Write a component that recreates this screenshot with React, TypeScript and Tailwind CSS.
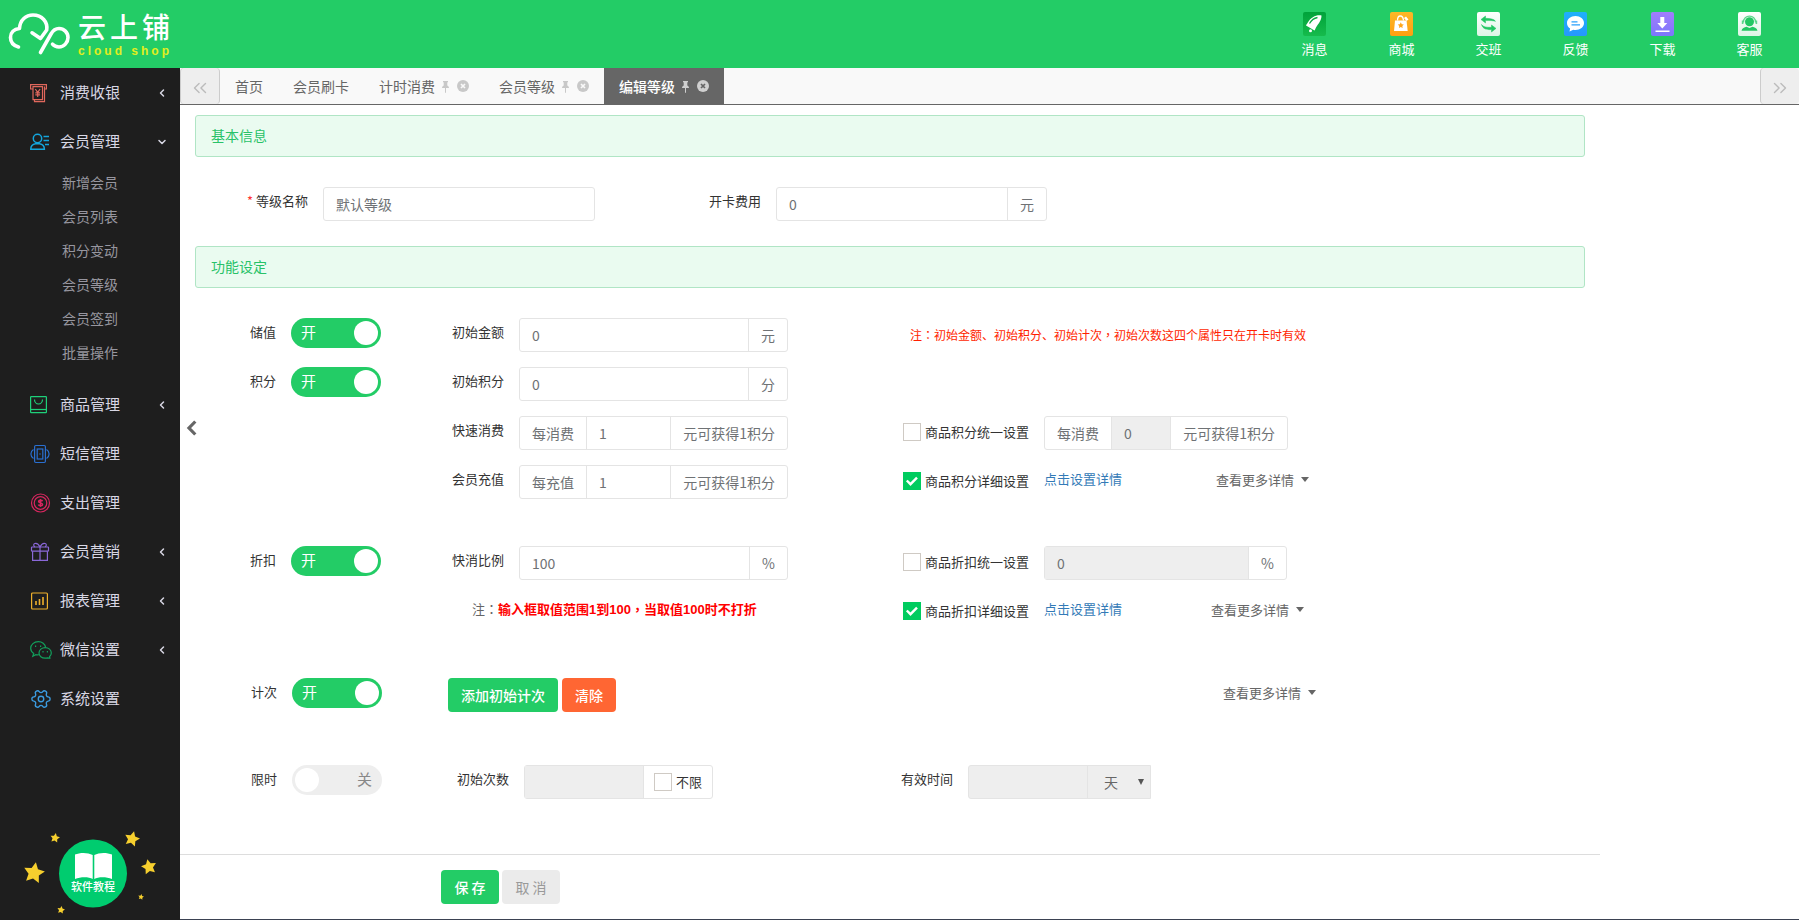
import React, { useState } from 'react';
import { ChevronDown, ChevronLeft, ChevronsLeft, ChevronsRight, Settings } from 'lucide-react';
import clsx from 'clsx';

interface MenuItem {
  label: string;
  icon: React.ReactNode;
  arrow?: 'left' | 'down';
  children?: string[];
}

const MenuSvg = ({ color, children }: { color: string; children: React.ReactNode }) => (
  <svg width="22" height="20" viewBox="0 0 22 20" fill="none" stroke={color} strokeWidth="1.2" className="shrink-0">
    {children}
  </svg>
);

const menu: MenuItem[] = [
  {
    label: '消费收银',
    arrow: 'left',
    icon: (
      <MenuSvg color="#e0675c">
        <path d="M3 6H.6V1.6h15.8V6H14.5" />
        <path d="M3 3.6v13h9.5V3.6z" />
        <path d="M4.5 16.8v1.8h10V3.6" />
        <path d="M5.3 6l2.4 3.4L10.1 6M7.7 9.4V14M5.3 9.8h4.8M5.3 11.8h4.8" />
      </MenuSvg>
    ),
  },
  {
    label: '会员管理',
    arrow: 'down',
    icon: (
      <MenuSvg color="#14a5dc">
        <circle cx="7.5" cy="6.5" r="4.2" strokeWidth="1.5" />
        <path d="M.8 17.2c0-3.2 2.2-5 4.7-5.400h4c2.500.4 4.900 2.200 4.900 5.400z" strokeWidth="1.5" />
        <path d="M13.5 4.5H19M13.5 8.5H19M15 12.5h4" strokeWidth="1.3" />
      </MenuSvg>
    ),
    children: ['新增会员', '会员列表', '积分变动', '会员等级', '会员签到', '批量操作'],
  },
  {
    label: '商品管理',
    arrow: 'left',
    icon: (
      <MenuSvg color="#1ed07a">
        <rect x=".6" y="1.6" width="15.8" height="16" rx=".6" />
        <path d="M.6 14.5h15.8" />
        <path d="M4.5 4.5a4 4.5 0 0 0 8 0" />
      </MenuSvg>
    ),
  },
  {
    label: '短信管理',
    icon: (
      <MenuSvg color="#2a6fd0">
        <rect x="4.6" y="1.5" width="10.8" height="17" rx="1.2" />
        <rect x="7.2" y="5" width="5.6" height="10" />
        <path d="M9.5 10h1" strokeWidth="1.5" />
        <path d="M3.5 5.5a5.2 5.2 0 0 0 0 9M16.5 5.5a5.2 5.2 0 0 1 0 9" />
      </MenuSvg>
    ),
  },
  {
    label: '支出管理',
    icon: (
      <MenuSvg color="#d8265f">
        <circle cx="10.5" cy="10" r="9" />
        <circle cx="10.5" cy="10" r="6.3" />
        <path d="M12.6 8.2c-.5-1.2-4-1.3-4 .3s4 1.2 4 2.9-3.7 1.7-4.2.2M10.5 6v8" strokeWidth="1.5" />
      </MenuSvg>
    ),
  },
  {
    label: '会员营销',
    arrow: 'left',
    icon: (
      <MenuSvg color="#8a68d8">
        <rect x="1.5" y="5" width="17" height="4.2" rx=".6" />
        <path d="M2.6 9.2v9.2h14.8V9.2M10 5v13.4" />
        <path d="M10 5C8.5 2 6.5 1 4.8 1.5 3.2 2 3.5 4 4.8 5M10 5c1.5-3 3.5-4 5.2-3.5 1.6.5 1.3 2.5 0 3.5" />
      </MenuSvg>
    ),
  },
  {
    label: '报表管理',
    arrow: 'left',
    icon: (
      <MenuSvg color="#eeb02c">
        <rect x="1.6" y="2" width="15.8" height="16" rx="1" />
        <path d="M6 14v-4M9.5 14V8M13 14V6" strokeWidth="1.6" />
      </MenuSvg>
    ),
  },
  {
    label: '微信设置',
    arrow: 'left',
    icon: (
      <MenuSvg color="#12a05c">
        <path d="M15.6 7.3C15.2 4 12 1.7 8.3 1.7 4 1.7.7 4.6.7 8.2c0 2.2 1.1 4 3 5.2l-.9 2.8 3-1.6c1 .2 2 .3 3 .1" />
        <path d="M21.3 12.9c0-3-2.7-5.3-6.1-5.3S9 9.9 9 12.9s2.7 5.3 6.2 5.3c.8 0 1.5-.1 2.2-.3l2.5.1-.3-1.5c1.1-1 1.7-2.2 1.7-3.6z" />
        <path d="M5 6.3h1.2M10 6.3h1.2M12.4 11.7h1.2M16.8 11.7H18" strokeWidth="1.5" />
      </MenuSvg>
    ),
  },
  {
    label: '系统设置',
    icon: <Settings size={22} strokeWidth={1.5} className="shrink-0 rotate-90 text-[#3b9be0]" />,
  },
];

const stars = [
  { x: 34, y: 43, r: 11, rot: 10 },
  { x: 55, y: 8, r: 5, rot: 10 },
  { x: 132, y: 9, r: 8, rot: 15 },
  { x: 149, y: 37, r: 8, rot: -12 },
  { x: 141, y: 67, r: 3, rot: 10 },
  { x: 61, y: 80, r: 4, rot: 10 },
];

const starPoints = (r: number) =>
  Array.from({ length: 10 }, (_, i) => {
    const len = i % 2 ? r * 0.5 : r;
    const angle = (Math.PI / 5) * i - Math.PI / 2;
    return `${(len * Math.cos(angle)).toFixed(2)},${(len * Math.sin(angle)).toFixed(2)}`;
  }).join(' ');

const headerLinks = [
  {
    label: '消息',
    from: '#00a23a',
    to: '#16bb4c',
    art: (
      <>
        <path d="M18.5 3.5c-5-1-10.5 1.500-14 7.500-.8 1.400-1.500 2-1.500 2.600l8.500 4.900c.7-.4.7-1.400 1.500-2.900 3-5 5.500-7 5.500-12.100z" fill="#fff" />
        <circle cx="7.5" cy="18.8" r="1.5" fill="#fff" />
        <path d="M6.5 11.5c2-3.5 5-5.5 8-6" stroke="#0aab42" strokeWidth="1.3" fill="none" />
      </>
    ),
  },
  {
    label: '商城',
    from: '#fdb827',
    to: '#ff9f10',
    art: (
      <>
        <path d="M5 8.5h11.5l1.2 10.5H4z" fill="#fff" />
        <path d="M7.5 8.5C7.5 2.5 13 2.5 13.5 8.5" stroke="#fff" strokeWidth="1.3" fill="none" />
        <path d="M14 6l2-1.5 2.5 3L16.5 9z" fill="#fff" />
        <polygon points={starPoints(3.2)} transform="translate(10.8 13.5)" fill="#ffa51a" />
      </>
    ),
  },
  {
    label: '交班',
    from: '#ffffff',
    to: '#dcf5e5',
    art: (
      <path
        d="M8.500 4v2.300c5 .2 8.500.7 10 3-2.500-.8-5.500-.8-10-.7V11L4 7.500zM14.500 13v2.300c-5 .2-8.500-.3-10-2.800C6 17 9 17.800 14.500 17.600V20l4.500-3.600z"
        fill="#22c763"
        stroke="#22c763"
        strokeWidth=".5"
      />
    ),
  },
  {
    label: '反馈',
    from: '#1fb0fb',
    to: '#2697fb',
    art: (
      <>
        <path d="M11.5 4c-4.800 0-8.500 3-8.500 7 0 2.300 1.200 4.300 3.100 5.500L5.500 19.500l3.800-1.700c.7.200 1.400.2 2.200.2 4.800 0 8.500-3 8.500-7s-3.700-7-8.500-7z" fill="#fff" />
        <path d="M7.5 9.800h6M7.5 12.800h8.500" stroke="#2aa1fb" strokeWidth="1.2" />
      </>
    ),
  },
  {
    label: '下载',
    from: '#a27dfc',
    to: '#7b77fb',
    art: <path d="M9.300 5h4v6h3L11.300 16.500 6.300 11h3zM4.500 18.500h14v1.500h-14z" fill="#fff" />,
  },
  {
    label: '客服',
    from: '#ffffff',
    to: '#dcf5e5',
    art: (
      <>
        <circle cx="11.5" cy="9.8" r="4.5" fill="#22c763" />
        <path d="M5.5 10.5C5 2 18 2 17.5 10.5" stroke="#5bd68c" strokeWidth="1.3" fill="none" />
        <path d="M4.6 8.5v3.5M18.4 8.5v3.5" stroke="#5bd68c" strokeWidth="1.6" />
        <path d="M3.5 18.8c.5-2.800 3-3.500 5-4l3 1.200 3-1.200c2 .5 4.500 1.200 5 4z" fill="#22c763" />
      </>
    ),
  },
];

const tabs = [
  { label: '首页', closable: false },
  { label: '会员刷卡', closable: false },
  { label: '计时消费', closable: true },
  { label: '会员等级', closable: true },
  { label: '编辑等级', closable: true },
];

const Header = () => (
  <header className="flex h-[68px] shrink-0 items-center justify-between bg-[#23cc66] pl-2 pr-[6px] text-white">
    <a href="#home" className="flex items-center">
      <svg width="62" height="44" viewBox="0 0 62 44" fill="none" stroke="#fff" strokeWidth="3.6" strokeLinecap="round" strokeLinejoin="round">
        <path d="M10.5 35C5 33.5 2.5 30 2.5 25.5c0-5 3.5-8.5 9-9C12 8 18 3 25 3c9 0 15 7 13.7 15L32.5 26.5 24 20.8" />
        <path d="M32.5 40.5L43 22c2.5-4.5 5-5.5 8-5.5 5 0 9 4 9 9s-4 9.500-9 9.500c-3 0-5-1-6.500-2.800" />
      </svg>
      <span className="ml-2 flex flex-col">
        <span className="h-[34px] text-[28px] font-medium leading-8 tracking-[4px]">云上铺</span>
        <span className="font-[Liberation_Sans] text-xs font-bold leading-[14px] tracking-[3px] text-[#e2ee1e]">cloud shop</span>
      </span>
    </a>
    <nav className="flex">
      {headerLinks.map((item, i) => (
        <a key={item.label} href="#nav" className="flex w-[87px] flex-col items-center gap-1 pt-px">
          <svg width="23" height="24" viewBox="0 0 23 24">
            <defs>
              <linearGradient id={`head-${i}`} x1="0" y1="0" x2="0" y2="1">
                <stop offset="0" stopColor={item.from} />
                <stop offset="1" stopColor={item.to} />
              </linearGradient>
            </defs>
            <rect width="23" height="24" rx="2" fill={`url(#head-${i})`} />
            {item.art}
          </svg>
          <span className="text-[13px] leading-[18px]">{item.label}</span>
        </a>
      ))}
    </nav>
  </header>
);

const Sidebar = () => (
  <aside className="flex w-[180px] shrink-0 flex-col bg-[#1e1e1e]">
    <ul>
      {menu.map((item) => (
        <li key={item.label}>
          <a href="#menu" className="flex h-[49px] items-center gap-2 pl-[30px] pr-3 text-[15px] text-[#d8d7e4]">
            {item.icon}
            <span className="flex-1">{item.label}</span>
            {item.arrow === 'left' && <ChevronLeft size={12} strokeWidth={3} />}
            {item.arrow === 'down' && <ChevronDown size={12} strokeWidth={3} />}
          </a>
          {item.children && (
            <ul className="pb-[10px]">
              {item.children.map((child) => (
                <li key={child}>
                  <a href="#menu" className="block pb-[2px] pl-[62px] text-sm leading-8 text-[#97969f]">
                    {child}
                  </a>
                </li>
              ))}
            </ul>
          )}
        </li>
      ))}
    </ul>
    <a href="#guide" className="relative mt-auto block h-[90px]">
      <svg width="180" height="90" viewBox="0 0 180 90">
        {stars.map((s) => (
          <polygon key={s.x} points={starPoints(s.r)} transform={`translate(${s.x} ${s.y}) rotate(${s.rot})`} fill="#f6cf2e" />
        ))}
        <circle cx="93" cy="43.5" r="34" fill="#00cc6f" />
        <path d="M75 24.5c5-2.200 13-2.200 17.700.5v24c-4-2.500-12-2.500-17.700 0zM112 24.500c-5-2.200-13-2.200-17.700.5v24c4-2.500 12-2.500 17.700 0z" fill="#fff" />
      </svg>
      <span className="absolute left-[71px] top-[48px] text-[11px] font-medium leading-4 text-white">软件教程</span>
    </a>
  </aside>
);

const Tabs = () => {
  const [active, setActive] = useState('编辑等级');

  return (
    <div className="flex h-[37px] shrink-0 border-b border-[#666] bg-[#f9f9f9]">
      <button aria-label="向左" className="flex w-10 items-center justify-center rounded-sm border-x border-[#ccc] bg-[#eee] pt-1 text-[#bbb]">
        <ChevronsLeft size={22} strokeWidth={1.5} />
      </button>
      {tabs.map((tab) => (
        <button
          key={tab.label}
          onClick={() => setActive(tab.label)}
          className={clsx(
            'flex items-center px-[15px] pb-px text-sm',
            active === tab.label ? 'bg-[#666] font-medium text-white' : 'text-[#666]'
          )}
        >
          {tab.label}
          {tab.closable && (
            <svg width="27" height="14" viewBox="0 0 27 14" className={clsx('ml-[7px]', active === tab.label ? 'text-[#d0d0d0]' : 'text-[#c8c8c8]')}>
              <path d="M1 2h5v1.200H5.300V6.500C6.300 7 7 7.800 7 9H4v4.500L3.500 14 3 13.500V9H0c0-1.200.7-2 1.700-2.500V3.200H1z" fill="currentColor" />
              <circle cx="21" cy="7" r="6" fill="currentColor" />
              <path d="M19 5l4 4M23 5l-4 4" stroke={active === tab.label ? '#666' : '#f9f9f9'} strokeWidth="1.7" />
            </svg>
          )}
        </button>
      ))}
      <button aria-label="向右" className="ml-auto flex w-[39px] items-center justify-center rounded-sm border-l border-[#ccc] bg-[#eee] pt-1 text-[#bbb]">
        <ChevronsRight size={22} strokeWidth={1.5} />
      </button>
    </div>
  );
};

const SectionTitle = ({ children }: { children: React.ReactNode }) => (
  <h2 className="mx-[15px] rounded-[3px] border border-[#b0e5c5] bg-[#eafbf0] px-[15px] pb-[2px] text-sm leading-[38px] text-[#28c268]">{children}</h2>
);

const FieldLabel = ({ htmlFor, children }: { htmlFor?: string; children: React.ReactNode }) => (
  <label htmlFor={htmlFor} className="pr-[15px] text-right leading-7 text-[#333]">
    {children}
  </label>
);

// punctuation centred in its full-width cell
const Mark = ({ children }: { children: string }) => (
  <span className="font-['Noto_Sans_CJK_TC',sans-serif]">{children}</span>
);

interface InputGroupProps {
  id: string;
  value?: string;
  before?: string;
  after?: string;
  disabled?: boolean;
  className?: string;
  label?: string;
}

const InputGroup = ({ id, value = '', before, after, disabled, className, label }: InputGroupProps) => (
  <div className={clsx('flex h-[34px] rounded-[3px] border border-[#e4e4e4] bg-white text-sm leading-8 text-[#6f7275]', className)}>
    {before && <span className="shrink-0 border-r border-[#e4e4e4] px-3">{before}</span>}
    <input
      id={id}
      aria-label={label}
      defaultValue={value}
      disabled={disabled}
      className="w-0 min-w-0 flex-1 px-3 outline-none disabled:bg-[#eee]"
    />
    {after && <span className="shrink-0 border-l border-[#e4e4e4] px-3">{after}</span>}
  </div>
);

const Toggle = ({ id, initial = true }: { id: string; initial?: boolean }) => {
  const [on, setOn] = useState(initial);

  return (
    <label
      className={clsx(
        'flex h-[30px] w-[90px] items-center justify-between rounded-full px-[3px] text-[15px]',
        on ? 'bg-[#23cc66] text-white' : 'flex-row-reverse bg-[#eee] text-[#888]'
      )}
    >
      <input id={id} type="checkbox" className="sr-only" checked={on} onChange={() => setOn(!on)} />
      <span className="px-[7px] pb-px">{on ? '开' : '关'}</span>
      <span className="size-6 rounded-full bg-white" />
    </label>
  );
};

const Check = ({ id, label, checked }: { id: string; label: string; checked?: boolean }) => (
  <label htmlFor={id} className="flex h-8 items-center gap-1 whitespace-nowrap text-[#333]">
    <span className="relative size-[18px]">
      <input
        id={id}
        type="checkbox"
        defaultChecked={checked}
        className="peer block size-[18px] appearance-none border border-[#cfcac4] bg-white checked:border-[#00cc5f] checked:bg-[#00cc5f]"
      />
      <svg className="pointer-events-none absolute inset-0 hidden peer-checked:block" width="18" height="18" viewBox="0 0 18 18" fill="none" stroke="#fff" strokeWidth="2.4">
        <path d="M3.8 8.5l3.7 3.7 6.5-6.500" />
      </svg>
    </span>
    {label}
  </label>
);

const MoreButton = () => (
  <button className="flex h-[30px] items-center gap-[7px] whitespace-nowrap pb-px text-[#666]">
    查看更多详情
    <svg width="8" height="5" viewBox="0 0 8 5" fill="#666">
      <path d="M0 0h8L4 5z" />
    </svg>
  </button>
);

const rowGrid = 'grid min-h-[34px] grid-cols-[96px_90px_138px_269px_115px_141px_auto]';

const LevelForm = () => (
  <form className="max-w-[1420px] pt-[10px] text-[13px]" onSubmit={(e) => e.preventDefault()}>
    <SectionTitle>基本信息</SectionTitle>
    <div className="mx-[15px] mb-[25px] mt-[30px] grid grid-cols-[128px_272px_181px_271px]">
      <FieldLabel htmlFor="name">
        <span className="text-[#f33]">*</span> 等级名称
      </FieldLabel>
      <InputGroup id="name" value="默认等级" />
      <FieldLabel htmlFor="fee">开卡费用</FieldLabel>
      <InputGroup id="fee" value="0" after="元" />
    </div>

    <SectionTitle>功能设定</SectionTitle>
    <div className="mx-[15px] mt-[30px] flex flex-col gap-[15px]">
      <div className={rowGrid}>
        <FieldLabel htmlFor="stored">储值</FieldLabel>
        <Toggle id="stored" />
        <FieldLabel htmlFor="amount">初始金额</FieldLabel>
        <InputGroup id="amount" value="0" after="元" />
        <p className="col-span-2 col-start-6 pl-[7px] text-xs leading-[34px] text-[#ff1e00]">
          注<Mark>：</Mark>初始金额、初始积分、初始计次<Mark>，</Mark>初始次数这四个属性只在开卡时有效
        </p>
      </div>
      <div className={rowGrid}>
        <FieldLabel htmlFor="points">积分</FieldLabel>
        <Toggle id="points" />
        <FieldLabel htmlFor="initPoints">初始积分</FieldLabel>
        <InputGroup id="initPoints" value="0" after="分" />
      </div>
      <div className={rowGrid}>
        <span className="col-span-2" />
        <FieldLabel htmlFor="quick">快速消费</FieldLabel>
        <InputGroup id="quick" value="1" before="每消费" after="元可获得1积分" />
        <span />
        <Check id="uniPoints" label="商品积分统一设置" />
        <InputGroup id="uniPointsValue" label="每消费" value="0" before="每消费" after="元可获得1积分" disabled className="w-[244px]" />
      </div>
      <div className={rowGrid}>
        <span className="col-span-2" />
        <FieldLabel htmlFor="recharge">会员充值</FieldLabel>
        <InputGroup id="recharge" value="1" before="每充值" after="元可获得1积分" />
        <span />
        <Check id="detailPoints" label="商品积分详细设置" checked />
        <div className="flex items-start gap-[94px] leading-7">
          <a href="#points" className="text-[#337ab7]">点击设置详情</a>
          <MoreButton />
        </div>
      </div>
    </div>

    <div className="mx-[15px] mt-[47px] flex flex-col gap-[15px]">
      <div className={rowGrid}>
        <FieldLabel htmlFor="discount">折扣</FieldLabel>
        <Toggle id="discount" />
        <FieldLabel htmlFor="ratio">快消比例</FieldLabel>
        <InputGroup id="ratio" value="100" after="%" />
        <span />
        <Check id="uniDiscount" label="商品折扣统一设置" />
        <InputGroup id="uniDiscountValue" label="商品折扣" value="0" after="%" disabled className="w-[243px]" />
      </div>
      <div className={rowGrid}>
        <p className="col-span-2 col-start-3 pl-[91px] leading-7 text-[#666]">
          注<Mark>：</Mark>
          <b className="font-['Liberation_Sans','Noto_Sans_CJK_SC',sans-serif] text-[#f00]">
            输入框取值范围1到100<Mark>，</Mark>当取值100时不打折
          </b>
        </p>
        <span />
        <Check id="detailDiscount" label="商品折扣详细设置" checked />
        <div className="flex items-start gap-[89px] leading-7">
          <a href="#discount" className="text-[#337ab7]">点击设置详情</a>
          <MoreButton />
        </div>
      </div>
    </div>

    <div className="mx-[15px] mt-[49px] grid grid-cols-[97px_156px_775px_auto]">
      <FieldLabel htmlFor="count">计次</FieldLabel>
      <Toggle id="count" />
      <div className="flex gap-1 text-sm font-medium text-white">
        <button className="h-[34px] rounded bg-[#23cc66] px-[13px]">添加初始计次</button>
        <button className="h-[34px] rounded bg-[#ff6633] px-[13px]">清除</button>
      </div>
      <MoreButton />
    </div>

    <div className="mx-[15px] mb-[55px] mt-[53px] grid grid-cols-[97px_90px_142px_377px_67px_auto]">
      <FieldLabel htmlFor="limit">限时</FieldLabel>
      <Toggle id="limit" initial={false} />
      <FieldLabel htmlFor="times">初始次数</FieldLabel>
      <div className="flex h-[34px] w-[189px] rounded-[3px] border border-[#e4e4e4]">
        <input id="times" disabled className="w-0 flex-1 border-r border-[#e4e4e4] bg-[#eee] px-3" />
        <div className="px-[10px]">
          <Check id="unlimited" label="不限" />
        </div>
      </div>
      <FieldLabel htmlFor="valid">有效时间</FieldLabel>
      <div className="flex h-[34px] w-[183px] rounded-l-[3px] border border-[#e4e4e4] bg-[#eee]">
        <input id="valid" disabled className="w-0 flex-1 border-r border-[#e4e4e4] px-3" />
        <div className="relative w-[62px]">
          <select aria-label="时间单位" disabled className="h-full w-full appearance-none pl-4 text-sm text-[#666] opacity-100">
            <option>天</option>
          </select>
          <svg className="pointer-events-none absolute right-[6px] top-[13px]" width="6" height="6" viewBox="0 0 6 6" fill="#555">
            <path d="M0 0h6L3 6z" />
          </svg>
        </div>
      </div>
    </div>

    <div className="flex gap-[3px] border-t border-[#ddd] pb-[14px] pl-[261px] pt-[15px] text-sm">
      <button className="h-[34px] w-[58px] rounded bg-[#23cc66] font-medium text-white">保 存</button>
      <button type="button" className="h-[34px] w-[58px] rounded bg-[#ebebeb] text-[#999]">取 消</button>
    </div>
  </form>
);

const App = () => (
  <div className="flex min-h-screen flex-col bg-white font-['Noto_Sans_CJK_SC',sans-serif]">
    <Header />
    <div className="flex flex-1">
      <Sidebar />
      <main className="relative flex min-w-0 flex-1 flex-col border-b border-[#3b4252]">
        <Tabs />
        <button aria-label="收起菜单" className="absolute left-[6px] top-[352px]">
          <svg width="11" height="16" viewBox="0 0 11 16" fill="none" stroke="#666" strokeWidth="3.2">
            <path d="M9.3 1.5L3 8l6.3 6.5" />
          </svg>
        </button>
        <LevelForm />
      </main>
    </div>
  </div>
);

export default App;
